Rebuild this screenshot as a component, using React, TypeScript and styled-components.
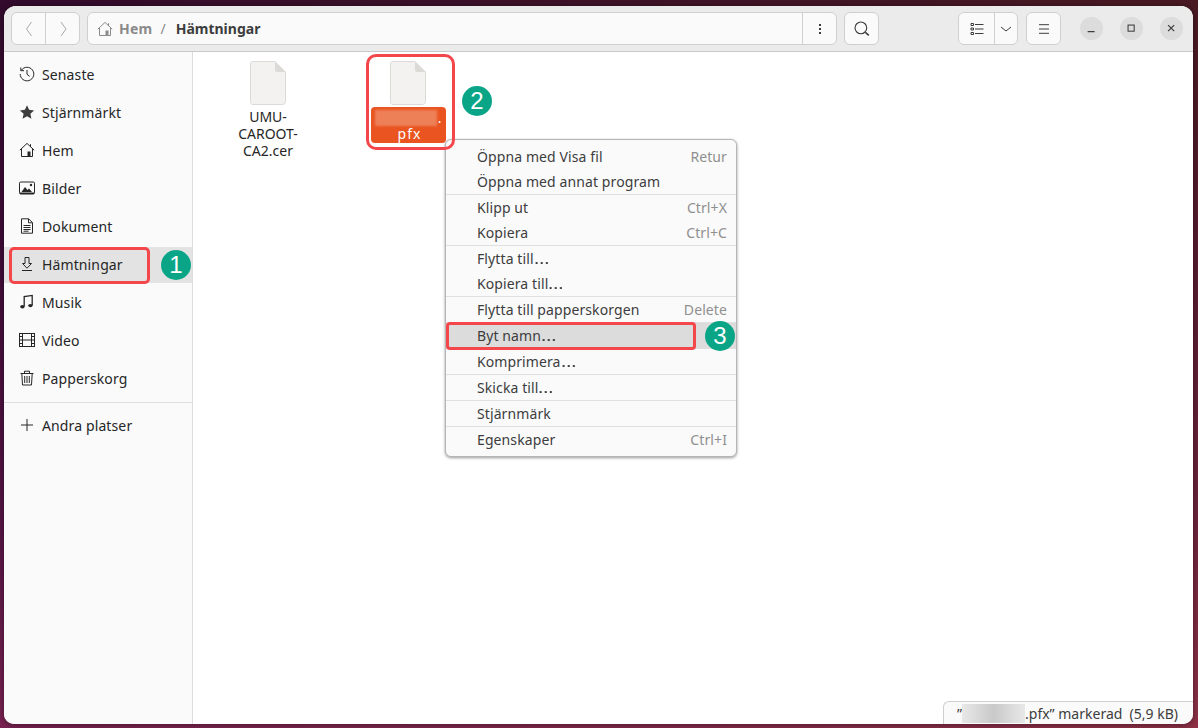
import React from 'react';
import styled, { createGlobalStyle } from 'styled-components';

const GlobalStyle = createGlobalStyle`
  html, body {
    margin: 0;
    padding: 0;
    height: 100%;
    overflow: hidden;
  }
  body {
    font-family: "Noto Sans", "Open Sans", sans-serif;
    font-size: 14px;
    color: #262626;
  }
`;

const Desktop = styled.div`
  position: relative;
  width: 1198px;
  height: 728px;
  box-sizing: border-box;
  padding: 6px 5px 4px 4px;
  background:
    linear-gradient(90deg, rgba(70, 10, 70, 0.25), rgba(160, 70, 30, 0.25)),
    linear-gradient(180deg, #2c0b24 0%, #3f0d35 35%, #5a1845 70%, #8a2a55 100%);
`;

const Window = styled.div`
  position: relative;
  display: flex;
  flex-direction: column;
  height: 100%;
  border-radius: 12px 12px 10px 10px;
  overflow: hidden;
  background: #ffffff;
  box-shadow: 0 1px 6px rgba(0, 0, 0, 0.45);
`;

const HeaderBar = styled.header`
  display: flex;
  align-items: center;
  flex: none;
  height: 46px;
  box-sizing: border-box;
  padding: 0 10px 0 7px;
  background: #ebebeb;
  border-bottom: 1px solid #c9c9c9;
`;

const ButtonGroup = styled.div<{ $width?: number; $ml?: number }>`
  display: flex;
  flex: none;
  height: 33px;
  box-sizing: border-box;
  width: ${(p) => (p.$width ? `${p.$width}px` : 'auto')};
  margin-left: ${(p) => p.$ml ?? 0}px;
  background: #fafafa;
  border: 1px solid #cfcfcf;
  border-radius: 6px;
`;

const HeaderButton = styled.div<{ $width: number; $divider?: boolean; $faded?: boolean }>`
  display: flex;
  align-items: center;
  justify-content: center;
  flex: none;
  width: ${(p) => p.$width}px;
  border-left: ${(p) => (p.$divider ? '1px solid #cfcfcf' : 'none')};
  box-sizing: border-box;
  color: ${(p) => (p.$faded ? '#a8a8a8' : '#3d3d3d')};
`;

const PathField = styled.div`
  display: flex;
  align-items: center;
  flex: 1;
  padding-left: 9px;
  font-weight: 700;
`;

const PathIcon = styled.span`
  display: flex;
  color: #8a8a8a;
`;

const PathHome = styled.span`
  margin-left: 6px;
  color: #8a8a8a;
  letter-spacing: 0.25px;
`;

const PathSlash = styled.span`
  margin: 0 10px 0 8px;
  color: #8a8a8a;
  font-weight: 400;
`;

const PathCurrent = styled.span`
  color: #3d3d3d;
`;

const WindowControl = styled.div<{ $ml: number }>`
  display: flex;
  align-items: center;
  justify-content: center;
  flex: none;
  width: 23px;
  height: 23px;
  margin-left: ${(p) => p.$ml}px;
  border-radius: 50%;
  background: #dcdcdc;
  color: #3d3d3d;
`;

const Body = styled.div`
  display: flex;
  flex: 1;
  min-height: 0;
`;

const Sidebar = styled.nav`
  display: flex;
  flex-direction: column;
  gap: 2px;
  flex: none;
  width: 189px;
  box-sizing: border-box;
  padding-top: 5px;
  background: #fafafa;
  border-right: 1px solid #dcdcdc;
`;

const SideRow = styled.div<{ $active?: boolean }>`
  display: flex;
  align-items: center;
  flex: none;
  height: 36px;
  box-sizing: border-box;
  padding: 0 0 2px 15px;
  gap: 7px;
  background: ${(p) => (p.$active ? '#e3e3e3' : 'transparent')};
  letter-spacing: 0.12px;
`;

const SideDivider = styled.div`
  flex: none;
  height: 1px;
  margin: 3px 0;
  background: #dfdfdf;
`;

const Content = styled.main`
  display: flex;
  flex: 1;
  align-items: flex-start;
  padding: 9px 0 0 5px;
`;

const FileItem = styled.div`
  display: flex;
  flex-direction: column;
  align-items: center;
  width: 140px;
`;

const FileGlyph = styled.svg`
  flex: none;
`;

const FileLabel = styled.div`
  width: 76px;
  margin-top: 3px;
  text-align: center;
  line-height: 17px;
  color: #262626;
`;

const SelectedLabel = styled.div`
  width: 75px;
  height: 36px;
  margin-top: 2px;
  padding-top: 2px;
  box-sizing: border-box;
  border-radius: 4px;
  background: #e95420;
  color: #fff;
  text-align: center;
  font-size: 14px;
  line-height: 17px;
  letter-spacing: 1px;
`;

const BlurredName = styled.div`
  display: flex;
  align-items: flex-end;
  justify-content: space-between;
  height: 17px;
  padding: 0 3px 0 4px;
  margin-bottom: -1px;
`;

const BlurredPatch = styled.span`
  width: 62px;
  height: 16px;
  background: #ee8058;
  filter: blur(1px);
`;

const BlurredDot = styled.span`
  line-height: 17px;
`;

const PfxText = styled.span`
  padding-left: 3px;
`;

const Annotation = styled.div<{ $x: number; $y: number; $w: number; $h: number; $r: number }>`
  position: absolute;
  left: ${(p) => p.$x}px;
  top: ${(p) => p.$y}px;
  width: ${(p) => p.$w}px;
  height: ${(p) => p.$h}px;
  box-sizing: border-box;
  border: 3px solid #f4474c;
  border-radius: ${(p) => p.$r}px;
  pointer-events: none;
`;

const StepBadge = styled.div<{ $x: number; $y: number }>`
  position: absolute;
  left: ${(p) => p.$x - 15}px;
  top: ${(p) => p.$y - 15}px;
  display: flex;
  align-items: center;
  justify-content: center;
  width: 30px;
  height: 30px;
  border-radius: 50%;
  background: #0aa587;
  color: #fff;
  font-family: "Liberation Sans", sans-serif;
  font-size: 24px;
`;

const Menu = styled.div`
  position: absolute;
  left: 445px;
  top: 139px;
  width: 292px;
  height: 318px;
  box-sizing: border-box;
  padding-top: 4px;
  background: #fafafa;
  border-radius: 6px;
  border: 1px solid #b5b5b5;
  box-shadow: 0 1px 3px rgba(0, 0, 0, 0.4);
`;

const MenuSection = styled.div`
  & + & {
    border-top: 1px solid #e0e0e0;
  }
`;

const MenuRow = styled.div<{ $active?: boolean }>`
  display: flex;
  align-items: center;
  justify-content: space-between;
  height: 25px;
  padding: 0 9px 0 31px;
  background: ${(p) => (p.$active ? '#dcdcdc' : 'transparent')};
  color: #3d3d3d;
  letter-spacing: 0.1px;
`;

const Ellipsis = styled.span`
  display: inline-block;
  margin-right: 4px;
  transform: scaleX(1.4);
  transform-origin: left center;
`;

const Shortcut = styled.span`
  color: #8f8f8f;
`;

const StatusFloat = styled.div`
  position: absolute;
  right: 0;
  bottom: 0;
  display: flex;
  align-items: center;
  width: 250px;
  height: 23px;
  box-sizing: border-box;
  padding-left: 13px;
  background: #fafafa;
  border-top: 1px solid #cfcfcf;
  border-left: 1px solid #cfcfcf;
  border-top-left-radius: 6px;
  color: #3d3d3d;
  white-space: pre;
`;

const StatusBlur = styled.span`
  display: inline-block;
  width: 63px;
  height: 19px;
  background: linear-gradient(90deg, #e8e8e8, #c9c9c9 50%, #e8e8e8);
`;

const IconSvg = styled.svg`
  flex: none;
`;

const Svg: React.FC<{ size?: number; children: React.ReactNode }> = ({ size = 16, children }) => (
  <IconSvg width={size} height={size} viewBox="0 0 16 16" fill="none" stroke="currentColor" strokeWidth="1">
    {children}
  </IconSvg>
);

const HomeIcon = () => (
  <Svg>
    <path d="M.8 8.2 8 1.4l7.2 6.8M2.5 7v7.5h11V7M11.5 2.2v2.6" />
    <path d="M8.5 9.5h3v5h-3z" fill="currentColor" stroke="none" />
  </Svg>
);

const sideIcons: Record<string, React.ReactNode> = {
  Senaste: (
    <Svg>
      <path d="M2.4 4.2A6.8 6.8 0 1 1 1.2 8" />
      <path d="M1.8 1.5v3.2H5M8 4v4.3l2.6 2" />
    </Svg>
  ),
  'Stjärnmärkt': (
    <Svg>
      <path d="m8 1.2 2.1 4.6 5 .6-3.7 3.4 1 5L8 12.3l-4.4 2.5 1-5L.9 6.4l5-.6z" fill="#3d3d3d" stroke="none" />
    </Svg>
  ),
  Hem: <HomeIcon />,
  Bilder: (
    <Svg>
      <rect x=".5" y="2" width="15" height="12" rx="1.2" />
      <path d="M1 14v-1.5h14V14z" fill="currentColor" stroke="none" />
      <path d="m2.5 12 3.5-5 2.5 3 1.5-1.5 3 3.5z" fill="currentColor" stroke="none" />
      <circle cx="12" cy="5" r="1.2" fill="currentColor" stroke="none" />
    </Svg>
  ),
  Dokument: (
    <Svg>
      <path d="M2.5.8h7.2l3.8 3.8v10.6h-11z" />
      <path d="M9.5 1v3.8h4M4.5 7.5h7M4.5 9.5h7M4.5 11.5h7M4.5 13.2h5" />
    </Svg>
  ),
  'Hämtningar': (
    <Svg>
      <path d="M6 1.5h4v6h2.5L8 12.2 3.5 7.5H6zM3 14.5h10" />
    </Svg>
  ),
  Musik: (
    <Svg>
      <path d="M5.2 12.5V2.6l8-1.2v9.8" strokeWidth="1.3" />
      <ellipse cx="3.4" cy="12.8" rx="2.2" ry="1.7" fill="currentColor" stroke="none" />
      <ellipse cx="11.4" cy="11.6" rx="2.2" ry="1.7" fill="currentColor" stroke="none" />
    </Svg>
  ),
  Video: (
    <Svg>
      <rect x=".5" y="1.5" width="15" height="13" />
      <path d="M3.5 1.5v13M12.5 1.5v13M3.5 8h9M.5 4.5h3M.5 8h3M.5 11.5h3M12.5 4.5h3M12.5 8h3M12.5 11.5h3" />
    </Svg>
  ),
  Papperskorg: (
    <Svg>
      <path d="M1.5 3.5h13M5.5 3.5V1.2h5v2.3M2.8 3.5l.7 11.5h9l.7-11.5M5.7 6v7M8 6v7M10.3 6v7" />
    </Svg>
  ),
};

const places = ['Senaste', 'Stjärnmärkt', 'Hem', 'Bilder', 'Dokument', 'Hämtningar', 'Musik', 'Video', 'Papperskorg'];

const FileIcon = () => (
  <FileGlyph width="36" height="44" viewBox="0 0 36 44">
    <path d="M3 .5h22L35.5 11v29.5a3 3 0 0 1-3 3H3a2.5 2.5 0 0 1-2.5-3V3A2.5 2.5 0 0 1 3 .5z" fill="#f3f2f1" stroke="#dcdad7" />
    <path d="M25 .5 35.5 11H27a2 2 0 0 1-2-2z" fill="#dcdad7" />
  </FileGlyph>
);

const menuSections: { label: string; shortcut?: string; active?: boolean }[][] = [
  [{ label: 'Öppna med Visa fil', shortcut: 'Retur' }, { label: 'Öppna med annat program' }],
  [{ label: 'Klipp ut', shortcut: 'Ctrl+X' }, { label: 'Kopiera', shortcut: 'Ctrl+C' }],
  [{ label: 'Flytta till…' }, { label: 'Kopiera till…' }],
  [{ label: 'Flytta till papperskorgen', shortcut: 'Delete' }],
  [{ label: 'Byt namn…', active: true }],
  [{ label: 'Komprimera…' }],
  [{ label: 'Skicka till…' }],
  [{ label: 'Stjärnmärk' }],
  [{ label: 'Egenskaper', shortcut: 'Ctrl+I' }],
];

const menuLabel = (label: string) =>
  label.endsWith('…') ? (
    <span>
      {label.slice(0, -1)}
      <Ellipsis>…</Ellipsis>
    </span>
  ) : (
    <span>{label}</span>
  );

const App: React.FC = () => (
  <Desktop>
    <GlobalStyle />
    <Window>
      <HeaderBar>
        <ButtonGroup $width={69}>
          <HeaderButton $width={33} $faded>
            <Svg><path d="M10.5 1 5.5 8l5 7" /></Svg>
          </HeaderButton>
          <HeaderButton $width={34} $divider $faded>
            <Svg><path d="m6 1 5 7-5 7" /></Svg>
          </HeaderButton>
        </ButtonGroup>
        <ButtonGroup $width={750} $ml={7}>
          <PathField>
            <PathIcon><HomeIcon /></PathIcon>
            <PathHome>Hem</PathHome>
            <PathSlash>/</PathSlash>
            <PathCurrent>Hämtningar</PathCurrent>
          </PathField>
          <HeaderButton $width={34} $divider>
            <Svg><path d="M8 3v2M8 7v2M8 11v2" strokeWidth="2" /></Svg>
          </HeaderButton>
        </ButtonGroup>
        <ButtonGroup $width={35} $ml={7}>
          <HeaderButton $width={33}>
            <Svg size={18}><circle cx="7" cy="7" r="5.2" /><path d="m11 11 3 2.6" strokeWidth="1.4" /></Svg>
          </HeaderButton>
        </ButtonGroup>
        <ButtonGroup $width={60} $ml={79}>
          <HeaderButton $width={35}>
            <Svg>
              <path d="M6 3.5h8.5M6 8h8.5M6 12.5h8.5" />
              <path d="M2 2.5h2.5v2H2zM2 7h2.5v2H2zM2 11.5h2.5v2H2z" />
            </Svg>
          </HeaderButton>
          <HeaderButton $width={23} $divider>
            <Svg><path d="m3 6 5 4 5-4" /></Svg>
          </HeaderButton>
        </ButtonGroup>
        <ButtonGroup $width={35} $ml={8}>
          <HeaderButton $width={33}>
            <Svg><path d="M3 3.7h10M3 8h10M3 12.3h10" /></Svg>
          </HeaderButton>
        </ButtonGroup>
        <WindowControl $ml={19}>
          <Svg size={14}><path d="M3 11h8" strokeWidth="1.2" /></Svg>
        </WindowControl>
        <WindowControl $ml={17}>
          <Svg size={14}><rect x="3.5" y="3.5" width="7" height="7" strokeWidth="1.2" /></Svg>
        </WindowControl>
        <WindowControl $ml={17}>
          <Svg size={14}><path d="m3.5 3.5 7 7m0-7-7 7" strokeWidth="1.4" /></Svg>
        </WindowControl>
      </HeaderBar>
      <Body>
        <Sidebar>
          {places.map((name) => (
            <SideRow key={name} $active={name === 'Hämtningar'}>
              {sideIcons[name]}
              {name}
            </SideRow>
          ))}
          <SideDivider />
          <SideRow>
            <Svg><path d="M8 2v12M2 8h12" /></Svg>
            Andra platser
          </SideRow>
        </Sidebar>
        <Content>
          <FileItem>
            <FileIcon />
            <FileLabel>UMU-CAROOT-CA2.cer</FileLabel>
          </FileItem>
          <FileItem>
            <FileIcon />
            <SelectedLabel>
              <BlurredName>
                <BlurredPatch />
                <BlurredDot>.</BlurredDot>
              </BlurredName>
              <PfxText>pfx</PfxText>
            </SelectedLabel>
          </FileItem>
        </Content>
      </Body>
      <StatusFloat>
        ”<StatusBlur />.pfx” markerad  (5,9 kB)
      </StatusFloat>
    </Window>

    <Menu>
      {menuSections.map((rows, i) => (
        <MenuSection key={i}>
          {rows.map((row) => (
            <MenuRow key={row.label} $active={row.active}>
              {menuLabel(row.label)}
              {row.shortcut && <Shortcut>{row.shortcut}</Shortcut>}
            </MenuRow>
          ))}
        </MenuSection>
      ))}
    </Menu>

    <Annotation $x={9} $y={247} $w={141} $h={37} $r={5} />
    <StepBadge $x={176} $y={265}>1</StepBadge>
    <Annotation $x={366} $y={54} $w={89} $h={96} $r={10} />
    <StepBadge $x={477} $y={101}>2</StepBadge>
    <Annotation $x={446} $y={322} $w={250} $h={28} $r={4} />
    <StepBadge $x={720} $y={336}>3</StepBadge>
  </Desktop>
);

export default App;
